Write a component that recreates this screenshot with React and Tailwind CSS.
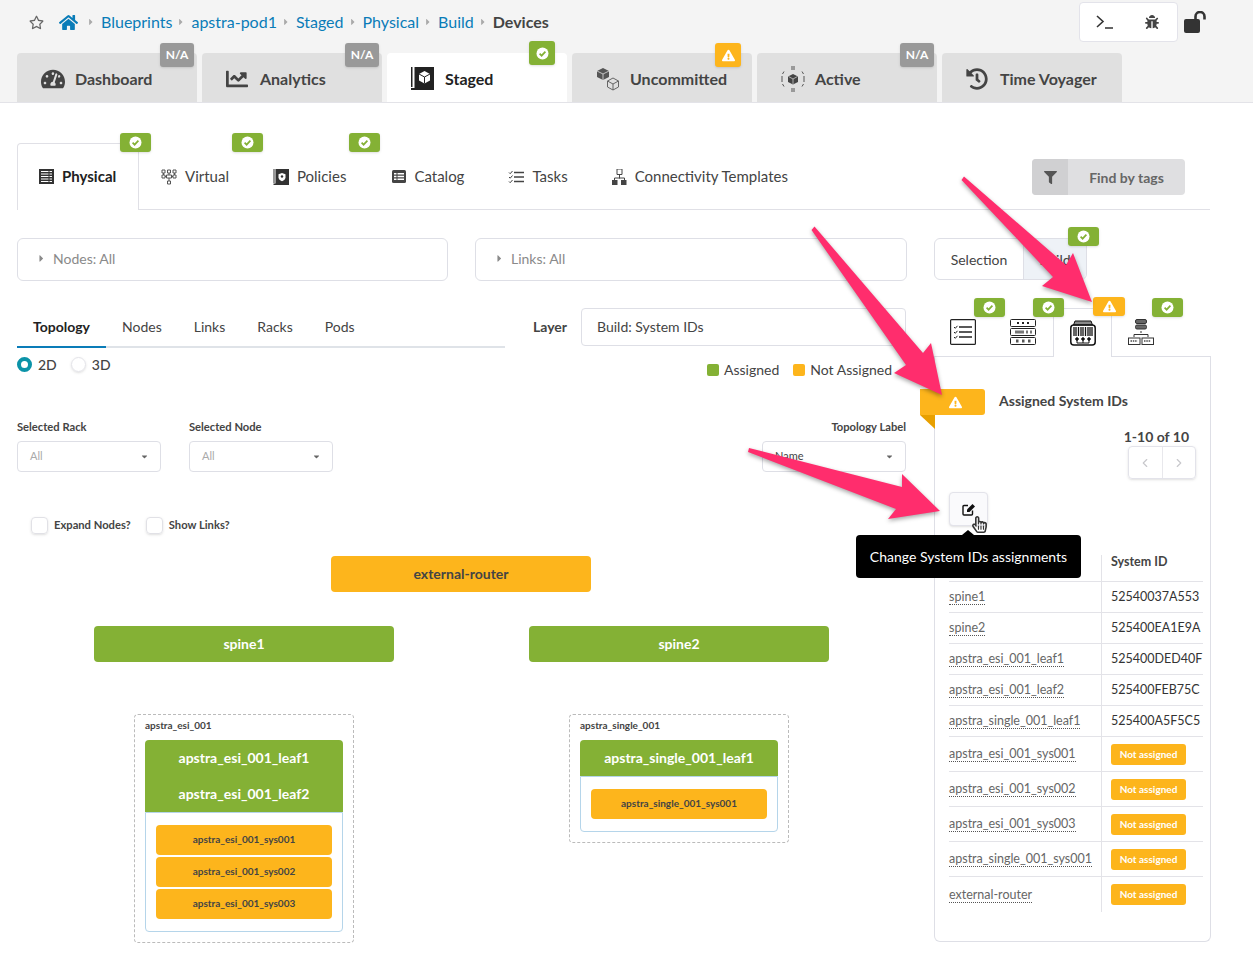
import { FaHome, FaTachometerAlt, FaChartLine, FaHistory, FaFilter, FaBug, FaExclamationTriangle, FaRegHandPointer, FaRegStar, FaCaretRight, FaCaretDown } from 'react-icons/fa';
import { ChevronLeft, ChevronRight } from 'lucide-react';

const GREEN = 'bg-[#84b135]';
const AMBER = 'bg-[#fdb51c]';

// small status chips that sit on the corners of tabs
function CheckDot({ color = '#84b135' }) {
    return (
        <svg width="13" height="13" viewBox="0 0 13 13">
            <circle cx="6.5" cy="6.5" r="6" fill="#fff" />
            <path d="M3.6 6.7l2 2 3.8-4" fill="none" stroke={color} strokeWidth="1.7" />
        </svg>
    );
}

function OkChip({ className }) {
    return (
        <span className={`absolute flex h-[19px] w-[31px] items-center justify-center rounded-[3px] shadow-sm ${GREEN} ${className}`}>
            <CheckDot />
        </span>
    );
}

function WarnChip({ className }) {
    return (
        <span className={`absolute flex items-center justify-center rounded-[3px] text-white shadow-sm ${AMBER} ${className}`}>
            <FaExclamationTriangle size={13} />
        </span>
    );
}

function NaChip({ className }) {
    return (
        <span className={`absolute flex h-[24px] w-[34px] items-center justify-center rounded-[3px] bg-[#999999] text-[12px] font-bold text-white shadow-sm ${className}`}>
            N/A
        </span>
    );
}

function StagedIcon() {
    return (
        <svg width="23" height="23" viewBox="0 0 23 23">
            <path d="M0 0h1.500v20H0zM0 21h4v2H0z" fill="#222" />
            <rect x="3.500" y="0" width="19.500" height="23" fill="#222" />
            <path d="M13.500 4l5.500 3v6.500l-5.500 3-5.500-3V7z" fill="#fff" />
            <path d="M8 7l5.500 3 5.500-3M13.500 10v6.500" fill="none" stroke="#222" strokeWidth="1" />
        </svg>
    );
}

function CubesIcon() {
    return (
        <svg width="24" height="24" viewBox="0 0 24 24">
            <path d="M7 1l6 3v6l-6 3-6-3V4z" fill="#555" />
            <path d="M1 4l6 3 6-3M7 7v6" fill="none" stroke="#ddd" strokeWidth=".8" />
            <path d="M17 11l5.500 3v6l-5.500 3-5.500-3v-6zM11.500 14l5.500 3 5.500-3M17 17v6" fill="none" stroke="#666" strokeWidth="1" />
        </svg>
    );
}

function ActiveIcon() {
    return (
        <svg width="24" height="26" viewBox="0 0 24 26" fill="none" stroke="#555" strokeWidth="1">
            <path d="M12 8l5 2.500v5.500l-5 2.500-5-2.500v-5.500z" fill="#444" stroke="none" />
            <path d="M7.500 10.500l4.500 2.500 4.500-2.500M12 13v5" stroke="#ddd" strokeWidth=".7" />
            <path d="M10 1h4M10 3h4M10 23h4M10 25h4M1.500 8l1.500-2.500M1 10v6M23 10v6M21 5.500l1.500 2.500M1.500 18l1.500 2.500M21 20.500l1.500-2.500" />
        </svg>
    );
}

function RackIcon() {
    return (
        <svg width="15" height="15" viewBox="0 0 15 15">
            <rect width="15" height="15" fill="#333" />
            <path d="M2 2.500h11M2 5h11M2 7.500h11M2 10h11M2 12.500h11" stroke="#fff" strokeWidth="1" />
            <path d="M10 1.500v12" stroke="#333" strokeWidth="1" />
        </svg>
    );
}

function VirtualIcon() {
    return (
        <svg width="16" height="16" viewBox="0 0 16 16" fill="none" stroke="#555" strokeWidth="1">
            <path d="M1 1h3v3H1zM6.500 1h3v3h-3zM12 1h3v3h-3zM1 6h3v3H1zM12 6h3v3h-3zM5.500 6h5v3h-5zM6.500 12h3v3h-3z" />
            <path d="M8 4v2M8 9v3M4 7.500h1.500M10.500 7.500H12M2.500 4v2M13.500 4v2" />
        </svg>
    );
}

function PoliciesIcon() {
    return (
        <svg width="16" height="16" viewBox="0 0 16 16">
            <path d="M.5 0h1v14h-1zM.5 14.500h3v1.500h-3z" fill="#333" />
            <rect x="2.500" width="13.500" height="16" fill="#333" />
            <path d="M9 4l3.500 1.200v3c0 2-1.500 3.200-3.500 4-2-.8-3.500-2-3.500-4v-3z" fill="#fff" />
            <circle cx="9" cy="7.500" r="1.200" fill="#333" />
        </svg>
    );
}

function CatalogIcon() {
    return (
        <svg width="14" height="13" viewBox="0 0 14 13">
            <rect width="14" height="13" rx="1.500" fill="#444" />
            <path d="M2 3h2.500v1.500H2zM2 5.800h2.500v1.500H2zM2 8.600h2.500v1.500H2zM5.500 3H12v1.500H5.500zM5.500 5.800H12v1.500H5.500zM5.500 8.600H12v1.500H5.500z" fill="#fff" />
        </svg>
    );
}

function TasksIcon() {
    return (
        <svg width="16" height="14" viewBox="0 0 16 14" fill="none" stroke="#444">
            <path d="M6 2.500h10M6 7h10M6 11.500h10" strokeWidth="1.500" />
            <path d="M1 2.500l1.200 1.200L4.500 1M1 7l1.200 1.200L4.500 5.500M1 11.500l1.200 1.200 2.300-2.700" strokeWidth="1" />
        </svg>
    );
}

function TemplatesIcon() {
    return (
        <svg width="15" height="16" viewBox="0 0 15 16">
            <path d="M5 0h5v5.500H5z" fill="none" stroke="#444" />
            <path d="M7.500 5.500v4M2.500 11V9h10v2" fill="none" stroke="#444" />
            <path d="M0 11h5.500v5H0zM9 11h5.500v5H9z" fill="#444" />
        </svg>
    );
}

function ChecklistBig() {
    return (
        <svg width="26" height="26" viewBox="0 0 26 26" fill="none" stroke="#222">
            <rect x=".6" y=".6" width="24.800" height="24.800" rx="1" strokeWidth="1.200" />
            <path d="M9 8h13M9 13h13M9 18h13" strokeWidth="1.400" />
            <path d="M4 8l1.300 1.300L7.500 6.800M4 13l1.300 1.300 2.200-2.500M4 18l1.300 1.300 2.200-2.500" strokeWidth="1" />
        </svg>
    );
}

function ServersBig() {
    return (
        <svg width="26" height="26" viewBox="0 0 26 26" fill="none" stroke="#222" strokeWidth="1">
            <rect x=".5" y=".5" width="25" height="7" rx="1" />
            <rect x=".5" y="9.500" width="25" height="7" rx="1" />
            <rect x=".5" y="18.500" width="25" height="7" rx="1" />
            <path d="M7 4h2M12 4h2M17 4h2" strokeWidth="2" />
            <path d="M5 13h9M16 13h2M20 13h2" strokeWidth="3" stroke="#777" />
            <path d="M6 22h2.500M12 22h2.500M18 22h2.500" strokeWidth="3" stroke="#555" />
        </svg>
    );
}

function BarcodeBig() {
    return (
        <svg width="26" height="26" viewBox="0 0 26 26" fill="none" stroke="#111">
            <path d="M5 1h16l1.500 4h-19z" fill="#888" strokeWidth="1" />
            <rect x=".8" y="5" width="24.400" height="20" rx="3" strokeWidth="1.500" />
            <path d="M4 7v9M6 7v9M8.500 7v9M11 7v9M13 7v9M15.500 7v9M18 7v9M20 7v9M22 7v9" strokeWidth="1.300" />
            <circle cx="7" cy="19" r="1.300" fill="#111" />
            <circle cx="13" cy="19" r="1.300" fill="#111" />
            <circle cx="19" cy="19" r="1.300" fill="#111" />
            <path d="M7 20v3h12v-3M13 20v3" strokeWidth="1" />
        </svg>
    );
}

function TreeBig() {
    return (
        <svg width="26" height="26" viewBox="0 0 26 26" fill="none" stroke="#333" strokeWidth="1">
            <rect x="7.500" y=".5" width="11" height="4" rx="1.500" fill="#666" />
            <rect x="7.500" y="6" width="11" height="4" rx="1.500" fill="#666" />
            <path d="M13 12v2M6 18v-2.500h14V18" />
            <rect x=".5" y="19" width="11.500" height="6.500" />
            <rect x="14" y="19" width="11.500" height="6.500" />
            <path d="M2.500 22h7M16 22h7" stroke="#777" strokeWidth="2" strokeDasharray="1.500 .8" />
        </svg>
    );
}

function LockOpenIcon() {
    return (
        <svg width="23" height="22" viewBox="0 0 23 22" className="ml-[6px] mt-[1px]">
            <rect x="0" y="8" width="16" height="14" rx="2" fill="#333" />
            <path d="M9 9V5.500a4.500 4.500 0 0 1 9 0V8.500" fill="none" stroke="#333" strokeWidth="2.600" transform="translate(2.500 0)" />
        </svg>
    );
}

function EditIcon() {
    return (
        <svg width="14" height="13" viewBox="0 0 14 13">
            <path d="M6 2.500H2a1 1 0 0 0-1 1V11a1 1 0 0 0 1 1h7.500a1 1 0 0 0 1-1V7.500" fill="none" stroke="#111" strokeWidth="1.400" />
            <path d="M5 6.500L10.500 1 13 3.500 7.500 9H5z" fill="#111" />
        </svg>
    );
}

function TopTab({ icon, label, active, children }) {
    return (
        <div className={`relative flex h-[49px] w-[180px] items-center rounded-t-[4px] pl-[24px] pt-[2px] text-[16px] font-bold ${active ? 'bg-white text-[#222222]' : 'bg-[#e0e0e0] text-[#444444]'}`}>
            <span className="flex w-[34px] shrink-0 items-center">{icon}</span>
            {label}
            {children}
        </div>
    );
}

function SubTab({ icon, label, className, children }) {
    return (
        <div className={`relative flex h-[67px] items-center gap-[8px] text-[15px] text-[#444444] ${className}`}>
            {icon}
            {label}
            {children}
        </div>
    );
}

function FilterBox({ label, className }) {
    return (
        <div className={`flex h-[43px] shrink-0 items-center gap-[6px] rounded-[6px] border border-[#dedfe6] pb-[2px] pl-[18px] text-[14px] text-[#8a8a8a] ${className}`}>
            <FaCaretRight size={11} />
            {label}
        </div>
    );
}

function SelectField({ value, className, muted }) {
    return (
        <div className={`flex h-[31px] w-[144px] items-center justify-between rounded-[4px] border border-[#dedfe6] pl-[12px] pr-[11px] text-[11px] ${muted ? 'text-[#aaaaaa]' : 'text-[#444444]'} ${className}`}>
            {value}
            <FaCaretDown size={9} className="text-[#666666]" />
        </div>
    );
}

function Checkbox({ label, className }) {
    return (
        <div className={`flex items-center gap-[6px] text-[11.200px] font-bold text-[#444444] ${className}`}>
            <span className="h-[17px] w-[17px] rounded-[4px] border border-[#e1e1e6] shadow-sm" />
            {label}
        </div>
    );
}

const assignedRows = [
    ['spine1', '52540037A553'],
    ['spine2', '525400EA1E9A'],
    ['apstra_esi_001_leaf1', '525400DED40F'],
    ['apstra_esi_001_leaf2', '525400FEB75C'],
    ['apstra_single_001_leaf1', '525400A5F5C5'],
];

const unassignedRows = ['apstra_esi_001_sys001', 'apstra_esi_001_sys002', 'apstra_esi_001_sys003', 'apstra_single_001_sys001', 'external-router'];

function NodeName({ children }) {
    return <span className="border-b border-dotted border-[#555555] text-[12.500px] leading-[15px] text-[#666666]">{children}</span>;
}

function Sys({ children, className }) {
    return (
        <div className={`flex h-[30px] items-center justify-center rounded-[4px] text-[10px] font-bold text-[#444444] ${AMBER} ${className}`}>
            {children}
        </div>
    );
}

export default function App() {
    return (
        <div className="relative h-[969px] w-[1253px] overflow-hidden bg-white [font-family:Lato,sans-serif]">
            <div className="h-[103px] border-b border-[#e3e3e8] bg-[#f4f4f4]">
                <div className="flex h-[53px] items-start justify-between pr-[46px]">
                    <div className="flex h-[44px] items-center pl-[29px] text-[16px] text-[#0a7cb8]">
                        <FaRegStar size={15} className="mr-[15px] text-[#666666]" />
                        <FaHome size={19} className="mr-[4px]" />
                        {['Blueprints', 'apstra-pod1', 'Staged', 'Physical', 'Build'].map((crumb) => (
                            <span key={crumb} className="flex items-center">
                                <FaCaretRight size={10} className="mx-[4px] text-[#aaaaaa]" />
                                <span className="ml-[1px]">{crumb}</span>
                            </span>
                        ))}
                        <FaCaretRight size={10} className="mx-[4px] text-[#aaaaaa]" />
                        <span className="ml-[1px] font-bold text-[#444444]">Devices</span>
                    </div>
                    <div className="flex items-center">
                        <div className="mt-[2px] flex h-[40px] w-[99px] items-center justify-between rounded-[4px] border border-[#e3e3ea] bg-white pl-[16px] pr-[18px]">
                            <svg width="18" height="14" viewBox="0 0 18 14" fill="none" stroke="#333" strokeWidth="1.600">
                                <path d="M1 1l6 5.500-6 5.500M9 13h8" />
                            </svg>
                            <FaBug size={14} className="text-[#444444]" />
                        </div>
                        <LockOpenIcon />
                    </div>
                </div>
                <div className="flex gap-[5px] pl-[17px]">
                    <TopTab icon={<FaTachometerAlt size={24} className="text-[#444444]" />} label="Dashboard">
                        <NaChip className="right-[3px] top-[-10px]" />
                    </TopTab>
                    <TopTab icon={<FaChartLine size={22} className="text-[#444444]" />} label="Analytics">
                        <NaChip className="right-[3px] top-[-10px]" />
                    </TopTab>
                    <TopTab active icon={<StagedIcon />} label="Staged">
                        <span className={`absolute right-[12px] top-[-12px] flex h-[24px] w-[26px] items-center justify-center rounded-[3px] shadow-sm ${GREEN}`}>
                            <CheckDot />
                        </span>
                    </TopTab>
                    <TopTab icon={<CubesIcon />} label="Uncommitted">
                        <WarnChip className="right-[11px] top-[-10px] h-[24px] w-[26px]" />
                    </TopTab>
                    <TopTab icon={<ActiveIcon />} label="Active">
                        <NaChip className="right-[3px] top-[-10px]" />
                    </TopTab>
                    <TopTab icon={<FaHistory size={22} className="text-[#444444]" />} label="Time Voyager" />
                </div>
            </div>

            <div className="px-[17px]">
                <div className="mt-[40px] flex h-[67px] w-[1193px] items-start border-b border-[#e0e0e6]">
                    <SubTab icon={<RackIcon />} label={<span className="font-bold text-[#222222]">Physical</span>} className="w-[122px] rounded-t-[4px] border-x border-t border-[#e0e0e6] bg-white pb-[2px] pl-[21px]">
                        <OkChip className="left-[102px] top-[-11px]" />
                    </SubTab>
                    <SubTab icon={<VirtualIcon />} label="Virtual" className="ml-[22px]">
                        <OkChip className="left-[71px] top-[-10px]" />
                    </SubTab>
                    <SubTab icon={<PoliciesIcon />} label="Policies" className="ml-[44px]">
                        <OkChip className="left-[76px] top-[-10px]" />
                    </SubTab>
                    <SubTab icon={<CatalogIcon />} label="Catalog" className="ml-[46px]" />
                    <SubTab icon={<TasksIcon />} label="Tasks" className="ml-[44px] gap-[6px]" />
                    <SubTab icon={<TemplatesIcon />} label="Connectivity Templates" className="ml-[44px]" />
                    <div className="ml-auto mr-[25px] mt-[16px] flex h-[36px] w-[153px] overflow-hidden rounded-[4px] bg-[#dfdfe1] text-[14px] font-bold text-[#666666]">
                        <span className="flex w-[36px] items-center justify-center bg-[#d0d0d2]">
                            <FaFilter size={13} className="text-[#555555]" />
                        </span>
                        <span className="flex flex-1 items-center justify-center">Find by tags</span>
                    </div>
                </div>

                <div className="mt-[28px] flex items-start">
                    {/* left column: filters and topology */}
                    <div className="w-[889px] shrink-0">
                        <div className="flex gap-[27px]">
                            <FilterBox label="Nodes: All" className="w-[431px]" />
                            <FilterBox label="Links: All" className="w-[432px]" />
                        </div>

                        <div className="mt-[27px] flex items-start">
                            <div className="mt-[3px] flex h-[37px] w-[488px] items-start border-b-2 border-[#dfe3e8] text-[14px] text-[#444444]">
                                <span className="-mb-[2px] flex h-[37px] w-[89px] items-start justify-center border-b-2 border-[#0a7cb8] pt-[5px] font-bold text-[#222222]">Topology</span>
                                <span className="ml-[16px] pt-[5px]">Nodes</span>
                                <span className="ml-[32px] pt-[5px]">Links</span>
                                <span className="ml-[32px] pt-[5px]">Racks</span>
                                <span className="ml-[32px] pt-[5px]">Pods</span>
                            </div>
                            <span className="ml-[28px] mt-[8px] text-[14px] font-bold text-[#444444]">Layer</span>
                            <div className="ml-[14px] flex h-[38px] w-[325px] items-center rounded-[4px] border border-[#dedfe6] pb-[1px] pl-[15px] text-[14px] text-[#444444]">Build: System IDs</div>
                        </div>

                        <div className="mt-[6px] flex items-start justify-between pr-[14px]">
                            <div className="flex items-center text-[14px] font-medium text-[#444444]">
                                <span className="h-[15px] w-[15px] rounded-full border-[4px] border-[#0b93a8] bg-white" />
                                <span className="ml-[6px]">2D</span>
                                <span className="ml-[14px] h-[15px] w-[15px] rounded-full border border-[#e3e3e8] shadow-sm" />
                                <span className="ml-[6px]">3D</span>
                            </div>
                            <div className="mt-[5px] flex items-center text-[14px] text-[#444444]">
                                <span className={`h-[12px] w-[12px] rounded-[2px] ${GREEN}`} />
                                <span className="ml-[5px]">Assigned</span>
                                <span className={`ml-[14px] h-[12px] w-[12px] rounded-[2px] ${AMBER}`} />
                                <span className="ml-[5px]">Not Assigned</span>
                            </div>
                        </div>

                        <div className="mt-[39px] flex items-end justify-between">
                            <div className="flex gap-[28px]">
                                <div>
                                    <div className="mb-[5px] text-[11.200px] font-bold text-[#444444]">Selected Rack</div>
                                    <SelectField value="All" muted />
                                </div>
                                <div>
                                    <div className="mb-[5px] text-[11.200px] font-bold text-[#444444]">Selected Node</div>
                                    <SelectField value="All" muted />
                                </div>
                            </div>
                            <div>
                                <div className="mb-[5px] text-right text-[11.200px] font-bold text-[#444444]">Topology Label</div>
                                <SelectField value="Name" />
                            </div>
                        </div>

                        <div className="mt-[45px] flex pl-[14px]">
                            <Checkbox label="Expand Nodes?" />
                            <Checkbox label="Show Links?" className="ml-[15px]" />
                        </div>

                        {/* topology diagram */}
                        <div className={`ml-[314px] mt-[22px] flex h-[36px] w-[260px] items-center justify-center rounded-[4px] text-[14px] font-bold text-[#444444] ${AMBER}`}>external-router</div>
                        <div className="ml-[77px] mt-[34px] flex gap-[135px]">
                            <div className={`flex h-[36px] w-[300px] items-center justify-center rounded-[4px] text-[14px] font-bold text-white ${GREEN}`}>spine1</div>
                            <div className={`flex h-[36px] w-[300px] items-center justify-center rounded-[4px] text-[14px] font-bold text-white ${GREEN}`}>spine2</div>
                        </div>
                        <div className="ml-[117px] mt-[52px] flex items-start gap-[215px]">
                            <div className="h-[229px] w-[220px] rounded-[4px] border border-dashed border-[#bbbbbb] px-[10px] pt-[4px]">
                                <div className="text-[10px] font-bold leading-[13px] text-[#444444]">apstra_esi_001</div>
                                <div className={`mt-[8px] rounded-t-[4px] text-center text-[14px] font-bold leading-[36px] text-white ${GREEN}`}>
                                    <div>apstra_esi_001_leaf1</div>
                                    <div>apstra_esi_001_leaf2</div>
                                </div>
                                <div className="flex flex-col gap-[2px] rounded-b-[4px] border border-[#b5d5ea] px-[10px] pb-[12px] pt-[12px]">
                                    <Sys>apstra_esi_001_sys001</Sys>
                                    <Sys>apstra_esi_001_sys002</Sys>
                                    <Sys>apstra_esi_001_sys003</Sys>
                                </div>
                            </div>
                            <div className="h-[129px] w-[220px] rounded-[4px] border border-dashed border-[#bbbbbb] px-[10px] pt-[4px]">
                                <div className="text-[10px] font-bold leading-[13px] text-[#444444]">apstra_single_001</div>
                                <div className={`mt-[8px] rounded-t-[4px] text-center text-[14px] font-bold leading-[36px] text-white ${GREEN}`}>apstra_single_001_leaf1</div>
                                <div className="rounded-b-[4px] border border-[#b5d5ea] px-[10px] py-[12px]">
                                    <Sys>apstra_single_001_sys001</Sys>
                                </div>
                            </div>
                        </div>
                    </div>

                    {/* right column: system ids panel */}
                    <div className="ml-[28px] w-[277px] shrink-0">
                        <div className="relative flex h-[42px] w-[153px] rounded-[6px] border border-[#dedfe6] text-[14px] text-[#444444]">
                            <span className="flex w-[88px] items-center justify-center">Selection</span>
                            <span className="flex flex-1 items-center justify-center rounded-r-[6px] border-l border-[#dedfe6] bg-[#eef2f7]">Build</span>
                            <OkChip className="left-[133px] top-[-12px]" />
                        </div>

                        <div className="relative mt-[28px] flex h-[49px] items-end border-b border-[#dedfe6]">
                            <span className="flex h-[37px] w-[59px] justify-center"><span className="ml-[-1px]"><ChecklistBig /></span></span>
                            <span className="flex h-[37px] w-[60px] justify-center"><ServersBig /></span>
                            <span className="-mb-px flex h-[49px] w-[59px] justify-center rounded-t-[4px] border-x border-t border-[#dedfe6] bg-white pt-[11px]"><BarcodeBig /></span>
                            <span className="flex h-[37px] w-[58px] justify-center"><TreeBig /></span>
                            <OkChip className="left-[40px] top-[-10px]" />
                            <OkChip className="left-[99px] top-[-10px]" />
                            <WarnChip className="left-[159px] top-[-11px] h-[19px] w-[32px]" />
                            <OkChip className="left-[218px] top-[-10px]" />
                        </div>

                        <div className="relative h-[585px] rounded-b-[6px] border-x border-b border-[#dedfe6] pl-[14px] pr-[7px]">
                            <div className={`absolute left-[-15px] top-[32px] flex h-[26px] w-[65px] items-center justify-center rounded-r-[3px] pl-[6px] text-white ${AMBER}`}>
                                <FaExclamationTriangle size={13} />
                            </div>
                            <svg className="absolute left-[-15px] top-[58px]" width="15" height="14" viewBox="0 0 15 14">
                                <path d="M0 0h15v14z" fill="#e8a000" />
                            </svg>
                            <div className="pl-[50px] pt-[35px] text-[14px] font-bold leading-[17px] text-[#444444]">Assigned System IDs</div>
                            <div className="mr-[14px] mt-[19px] text-right text-[14px] font-bold leading-[17px] text-[#444444]">1-10 of 10</div>
                            <div className="ml-[179px] mt-[1px] flex h-[33px] w-[68px] rounded-[4px] border border-[#e3e3ea] text-[#c8c8cc] shadow-sm">
                                <span className="flex flex-1 items-center justify-center border-r border-[#e8e8ec]"><ChevronLeft size={14} /></span>
                                <span className="flex flex-1 items-center justify-center"><ChevronRight size={14} /></span>
                            </div>
                            <div className="mt-[13px] flex h-[34px] w-[39px] items-center justify-center rounded-[4px] border border-[#e3e3ea] bg-[#fafafc] shadow-sm">
                                <EditIcon />
                            </div>

                            <div className="mt-[29px]">
                                <div className="flex h-[27px] border-b border-[#e3e3e8]">
                                    <span className="w-[153px] shrink-0 border-r border-[#e3e3e8]" />
                                    <span className="pl-[9px] text-[12.500px] font-bold leading-[14px] text-[#444444]">System ID</span>
                                </div>
                                {assignedRows.map(([node, id]) => (
                                    <div key={node} className="flex h-[31px] border-b border-[#e3e3e8]">
                                        <span className="flex w-[153px] shrink-0 items-center border-r border-[#e3e3e8]"><NodeName>{node}</NodeName></span>
                                        <span className="flex items-center whitespace-nowrap pl-[9px] text-[12.500px] text-[#333333]">{id}</span>
                                    </div>
                                ))}
                                {unassignedRows.map((node, i) => (
                                    <div key={node} className={`flex h-[35px] ${i < 4 ? 'border-b border-[#e3e3e8]' : ''}`}>
                                        <span className="flex w-[153px] shrink-0 items-center border-r border-[#e3e3e8]"><NodeName>{node}</NodeName></span>
                                        <span className="flex items-center pl-[9px]">
                                            <span className={`flex h-[21px] w-[75px] items-center justify-center rounded-[3px] text-[10px] font-bold text-white ${AMBER}`}>Not assigned</span>
                                        </span>
                                    </div>
                                ))}
                            </div>
                        </div>
                    </div>
                </div>
            </div>

            {/* tooltip + cursor over the edit button */}
            <div className="absolute left-[856px] top-[535px] flex h-[43px] w-[225px] items-center justify-center rounded-[4px] bg-black text-[14px] text-white">
                Change System IDs assignments
                <span className="absolute left-[106px] top-[-5px] h-0 w-0 border-x-[6px] border-b-[5px] border-x-transparent border-b-black" />
            </div>
            <FaRegHandPointer size={17} className="absolute left-[971px] top-[516px] text-[#333333]" />

            {/* annotation arrows */}
            <svg className="pointer-events-none absolute left-0 top-0 drop-shadow-[0_2px_2px_rgba(0,0,0,0.35)]" width="1253" height="969" viewBox="0 0 1253 969">
                <path d="M961.500 180L964 176.500L1066 265L1073 253L1092 302L1042 286L1053 277Z" fill="#ff2d6d" />
                <path d="M811.500 230L814.500 226.500L923 353L931 343L942 395L894 373L906 365Z" fill="#ff2d6d" />
                <path d="M748 452L749 448L902 487L902 474L940 511L888 519L896 509Z" fill="#ff2d6d" />
            </svg>
        </div>
    );
}
